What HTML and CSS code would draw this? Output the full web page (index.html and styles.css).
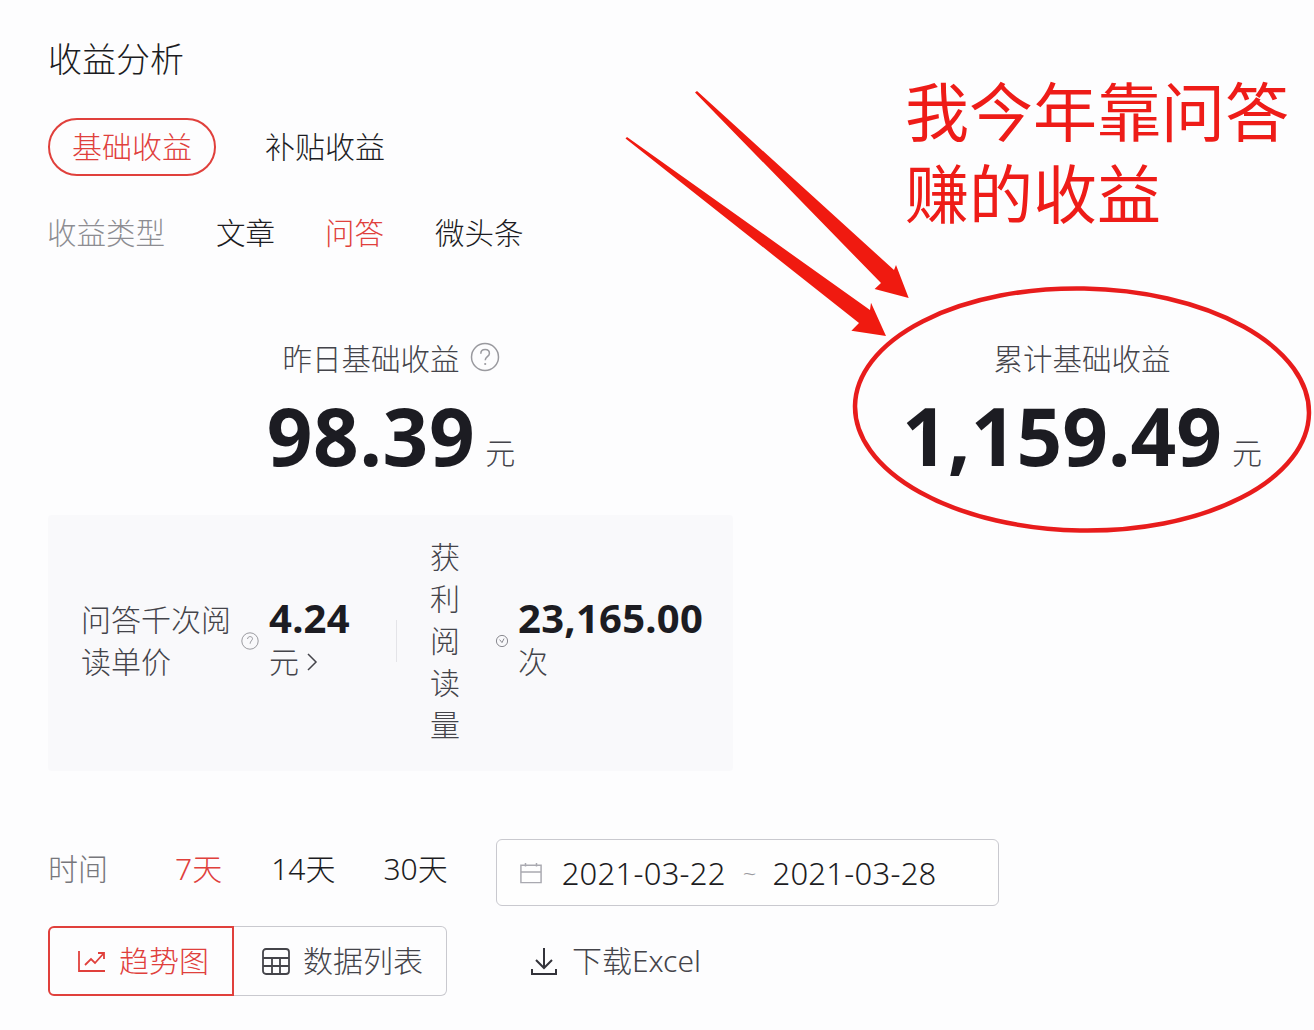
FILE: index.html
```html
<!DOCTYPE html>
<html lang="zh-CN">
<head>
<meta charset="utf-8">
<title>收益分析</title>
<link rel="stylesheet" href="styles.css">
</head>
<body>
<main class="page">
  <h1 class="title">收益分析</h1>
  <div class="tabs">
    <span class="pill">基础收益</span>
    <span class="tab">补贴收益</span>
  </div>
  <div class="types">
    <span class="types-label">收益类型</span>
    <span class="type">文章</span>
    <span class="type type-b active">问答</span>
    <span class="type type-c">微头条</span>
  </div>
  <section class="stats">
    <div class="stat">
      <div class="stat-label">昨日基础收益
        <svg class="help-lg" viewBox="0 0 30 30"><circle cx="15" cy="15" r="13.5"/><path d="M10.8 11.8c0-2.600 2-4.200 4.400-4.200s4.200 1.500 4.200 3.800c0 3.200-4.200 3.400-4.200 6.800"/><circle class="dot" cx="15.200" cy="22" r="1.100"/></svg>
      </div>
      <div class="stat-value"><b class="wide">98.39</b><span>元</span></div>
    </div>
    <div class="stat">
      <div class="stat-label">累计基础收益</div>
      <div class="stat-value"><b>1,159.49</b><span>元</span></div>
    </div>
  </section>
  <section class="box">
    <div class="cell-label first">问答千次阅读单价</div>
    <svg class="help-sm" viewBox="0 0 18 18"><circle cx="9" cy="9" r="8.200"/><path d="M6.600 7c0-1.500 1.100-2.400 2.500-2.400s2.400.9 2.400 2.100c0 1.500-2.400 2.600-2.400 5"/></svg>
    <div class="cell-value price">
      <b>4.24</b>
      <span>元<svg class="chev" viewBox="0 0 12 20"><path d="M2 2l8 8-8 8"/></svg></span>
    </div>
    <i class="divider"></i>
    <div class="cell-label narrow">获利阅读量</div>
    <svg class="help-xs" viewBox="0 0 14 14"><circle cx="7" cy="7" r="5.600"/><path d="M4.600 5.600L7 8.600l2-4"/></svg>
    <div class="cell-value">
      <b>23,165.00</b>
      <span>次</span>
    </div>
  </section>
  <div class="time-row">
    <span class="time-label">时间</span>
    <span class="range active">7天</span>
    <span class="range r14">14天</span>
    <span class="range r30">30天</span>
    <div class="date-box">
      <svg class="cal" viewBox="0 0 26 24"><path d="M2 3.500h22v19H2zM2 11h22M7 1v4M19 1v4"/></svg>
      <span class="date">2021-03-22</span>
      <span class="tilde">~</span>
      <span class="date">2021-03-28</span>
    </div>
  </div>
  <div class="actions">
    <button class="btn btn-on">
      <svg class="ico" viewBox="0 0 30 24"><path d="M2 2v20h26M8 16l6-6 4 4 9-10M21 4h6v6"/></svg><span class="btn-text">趋势图</span>
    </button>
    <button class="btn btn-off">
      <svg class="ico" viewBox="0 0 30 28"><rect x="2" y="2" width="26" height="25" rx="3"/><path d="M2 11h26M2 19h26M11 11v16M19 11v16"/></svg><span class="btn-text">数据列表</span>
    </button>
    <a class="download">
      <svg class="ico-dl" viewBox="0 0 28 30"><path d="M14 2v19M6 14l8 8 8-8M2 23v5h24v-5"/></svg><span class="btn-text">下载Excel</span>
    </a>
  </div>

  <svg class="marks" viewBox="0 0 1314 1030">
    <polygon points="695,92.500 697,91 894,270 896,265 908.700,298 874.600,289 881,283"/>
    <polygon points="625.500,138.500 627,137 870,310 871,302.700 886,336 851.400,330.700 859,323"/>
    <ellipse cx="1082" cy="409.500" rx="227" ry="121" transform="rotate(1 1082 409.500)"/>
  </svg>
  <p class="note">我今年靠问答<br>赚的收益</p>
</main>
</body>
</html>
```
FILE: styles.css
```css
* { box-sizing: border-box; }
html, body { margin: 0; padding: 0; }
body {
  background: #fdfdfe;
  color: #1c1c22;
  font-family: "Noto Sans", "Noto Sans CJK SC", sans-serif;
  font-weight: 300;
  font-size: 30px;
}
.page {
  position: relative;
  width: 1314px;
  height: 1030px;
  padding: 29px 0 0 47px;
  overflow: hidden;
}
.title {
  margin: 0 0 1px 1px;
  font-size: 34px;
  font-weight: 300;
  line-height: 60px;
  color: #1c1c22;
}
.tabs {
  display: flex;
  align-items: center;
  margin: 29px 0 0 1px;
  height: 58px;
}
.pill {
  display: flex;
  align-items: center;
  justify-content: center;
  width: 168px;
  height: 58px;
  padding-bottom: 4px;
  border: 2px solid #e0403c;
  border-radius: 29px;
  color: #e0403c;
}
.tab { margin: 0 0 4px 49px; color: #1c1c22; }
.types {
  display: flex;
  align-items: center;
  height: 60px;
  margin-top: 27px;
  font-size: 29.5px;
  line-height: 60px;
}
.types-label { width: 169px; color: #8d8d92; }
.type-b { margin-left: 50px; }
.type-c { margin-left: 51px; }
.active { color: #e0403c; }
.stats {
  display: grid;
  grid-template-columns: 686px 464px;
  justify-content: space-between;
  margin-left: 1px;
  padding-top: 72px;
}
.stat { display: flex; flex-direction: column; align-items: center; }
.stat-label {
  display: flex;
  align-items: center;
  gap: 10px;
  height: 44px;
  font-size: 29.5px;
  color: #44444a;
  white-space: nowrap;
}
.help-lg { width: 30px; height: 30px; fill: none; stroke: #9a9a9f; stroke-width: 1.5; }
.help-lg .dot { fill: #9a9a9f; stroke: none; }
.stat-value {
  display: flex;
  align-items: baseline;
  gap: 10px;
  height: 80px;
  margin-top: 16px;
  line-height: 80px;
}
.stat-value b { font-size: 80px; font-weight: 700; color: #1c1c22; }
.stat-value b.wide { letter-spacing: .6px; }
.stat-value span { position: relative; top: -2px; color: #44444a; }
.box {
  display: flex;
  align-items: center;
  width: 685px;
  height: 256px;
  margin: 40px 0 0 1px;
  padding: 0 0 4px 33px;
  background: #f9f9fb;
  border-radius: 4px;
}
.cell-label { line-height: 42px; color: #44444a; }
.cell-label.first { width: 150px; }
.cell-label.narrow { width: 30px; }
.help-sm { width: 18px; height: 18px; margin-left: 10px; fill: none; stroke: #9a9a9f; stroke-width: 1; }
.help-xs { width: 14px; height: 14px; margin-left: 35px; fill: none; stroke: #8a8a90; stroke-width: 1; }
.cell-value { display: flex; flex-direction: column; margin: 0 0 5px 9px; }
.cell-value.price { width: 82px; margin-left: 10px; }
.cell-value b { font-size: 40px; font-weight: 700; line-height: 46px; letter-spacing: .25px; color: #1c1c22; white-space: nowrap; }
.cell-value span { display: flex; align-items: center; line-height: 42px; color: #44444a; }
.chev { width: 12px; height: 20px; margin-left: 7px; fill: none; stroke: #44444a; stroke-width: 1.5; }
.divider { width: 1px; height: 42px; margin: 0 33px 0 45px; background: #e4e4e8; }
.time-row {
  display: flex;
  align-items: center;
  width: 952px;
  height: 67px;
  margin: 68px 0 0 1px;
}
.time-label { width: 127px; color: #77777c; padding-bottom: 12px; }
.range { padding-bottom: 12px; white-space: nowrap; }
.r14 { margin-left: 49px; }
.r30 { margin-left: 48px; }
.date-box {
  display: flex;
  align-items: center;
  flex: none;
  width: 503px;
  height: 67px;
  margin-left: 48px;
  padding-left: 22px;
  border: 1px solid #c9c9cf;
  border-radius: 6px;
  background: #fefefe;
}
.cal { width: 24px; height: 22px; fill: none; stroke: #a9a9b0; stroke-width: 1.6; }
.date { margin-left: 19px; font-size: 31px; letter-spacing: .25px; color: #1c1c22; white-space: nowrap; }
.tilde { margin-left: 17px; margin-right: -3px; font-size: 24px; color: #9a9a9f; }
.actions { display: flex; align-items: center; margin: 20px 0 0 1px; height: 70px; }
.btn {
  display: flex;
  align-items: center;
  height: 70px;
  font: inherit;
  background: #fdfdfe;
  border: 1px solid #c9c9cf;
  padding: 0;
}
.btn-text { padding-bottom: 4px; }
.btn-on {
  width: 186px;
  padding-left: 27px;
  border: 2px solid #e0403c;
  border-radius: 6px 0 0 6px;
  color: #e0403c;
}
.btn-off {
  width: 213px;
  padding-left: 27px;
  border-left: 0;
  border-radius: 0 6px 6px 0;
  color: #44444a;
}
.ico { width: 30px; height: 28px; margin-right: 12px; fill: none; stroke: currentColor; stroke-width: 1.8; }
.download { display: flex; align-items: center; margin-left: 83px; color: #44444a; }
.ico-dl { width: 28px; height: 30px; margin-right: 14px; fill: none; stroke: #33333a; stroke-width: 2; }
.marks {
  position: absolute;
  left: 0;
  top: 0;
  width: 1314px;
  height: 1030px;
  pointer-events: none;
}
.marks polygon { fill: #f01a10; }
.marks ellipse { fill: none; stroke: #e81c1c; stroke-width: 4.5; }
.note {
  position: absolute;
  left: 905px;
  top: 71px;
  margin: 0;
  font-size: 64px;
  font-weight: 400;
  line-height: 82px;
  color: #ee1c18;
  white-space: nowrap;
}
```
